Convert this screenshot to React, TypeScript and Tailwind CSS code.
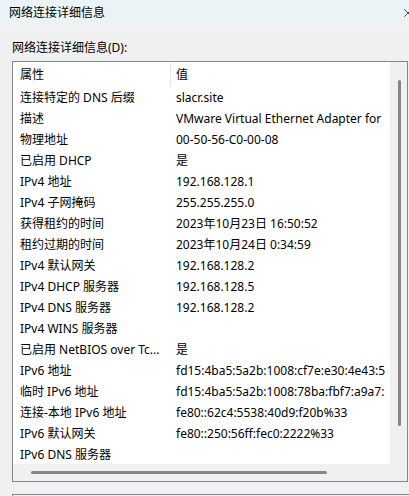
import { X } from "lucide-react";

const rows: [string, string][] = [
  ["连接特定的 DNS 后缀", "slacr.site"],
  ["描述", "VMware Virtual Ethernet Adapter for"],
  ["物理地址", "00-50-56-C0-00-08"],
  ["已启用 DHCP", "是"],
  ["IPv4 地址", "192.168.128.1"],
  ["IPv4 子网掩码", "255.255.255.0"],
  ["获得租约的时间", "2023年10月23日 16:50:52"],
  ["租约过期的时间", "2023年10月24日 0:34:59"],
  ["IPv4 默认网关", "192.168.128.2"],
  ["IPv4 DHCP 服务器", "192.168.128.5"],
  ["IPv4 DNS 服务器", "192.168.128.2"],
  ["IPv4 WINS 服务器", ""],
  ["已启用 NetBIOS over Tc...", "是"],
  ["IPv6 地址", "fd15:4ba5:5a2b:1008:cf7e:e30:4e43:5"],
  ["临时 IPv6 地址", "fd15:4ba5:5a2b:1008:78ba:fbf7:a9a7:"],
  ["连接-本地 IPv6 地址", "fe80::62c4:5538:40d9:f20b%33"],
  ["IPv6 默认网关", "fe80::250:56ff:fec0:2222%33"],
  ["IPv6 DNS 服务器", ""],
];

export default function App() {
  return (
    <div className="w-[409px] h-[496px] overflow-hidden bg-[#f0f0f0] text-black text-[12px] font-['Noto_Sans','Noto_Sans_CJK_SC',sans-serif]">
      <div className="h-[25px] bg-[#eaf4f7] flex items-center justify-between pl-[9px]">
        <span className="leading-[16px]">网络连接详细信息</span>
        <X className="w-[14px] h-[14px] mr-[-6px]" strokeWidth={1.2} />
      </div>

      <div className="pl-[12px] pt-[15px] leading-[16px]">网络连接详细信息(D):</div>

      <div className="mt-[5px] ml-[12px] w-[396px] h-[421px] border border-[#828790] flex flex-col">
        <div className="flex flex-1 min-h-0">
          <div className="flex-1 bg-white overflow-hidden whitespace-nowrap pt-[1px]">
            <div className="flex h-[24px] items-center">
              <div className="w-[157px] pl-[7px]">属性</div>
              <div className="self-stretch pb-[1px]">
                <div className="w-px h-full bg-[#e5e5e5]" />
              </div>
              <div className="pl-[5px]">值</div>
            </div>
            {rows.map(([k, v], i) => (
              <div key={i} className="flex h-[21px] items-center">
                <div className="w-[157px] shrink-0 pl-[7px]">{k}</div>
                <div className="pl-[6px]">{v}</div>
              </div>
            ))}
          </div>
          <div className="w-[17px] flex justify-center pt-[18px] pb-[38px] pl-[1px]">
            <div className="w-[3px] h-full rounded-full bg-[#858585]" />
          </div>
        </div>
        <div className="h-[17px] flex">
          <div className="w-[377px] pl-[18px] pt-[7px]">
            <div className="w-[296px] h-[3px] rounded-full bg-[#858585]" />
          </div>
          <div className="flex-1" />
        </div>
      </div>

      <div className="mt-[12px] ml-[12px] h-[10px] border-t border-l border-[#828790]" />
    </div>
  );
}
